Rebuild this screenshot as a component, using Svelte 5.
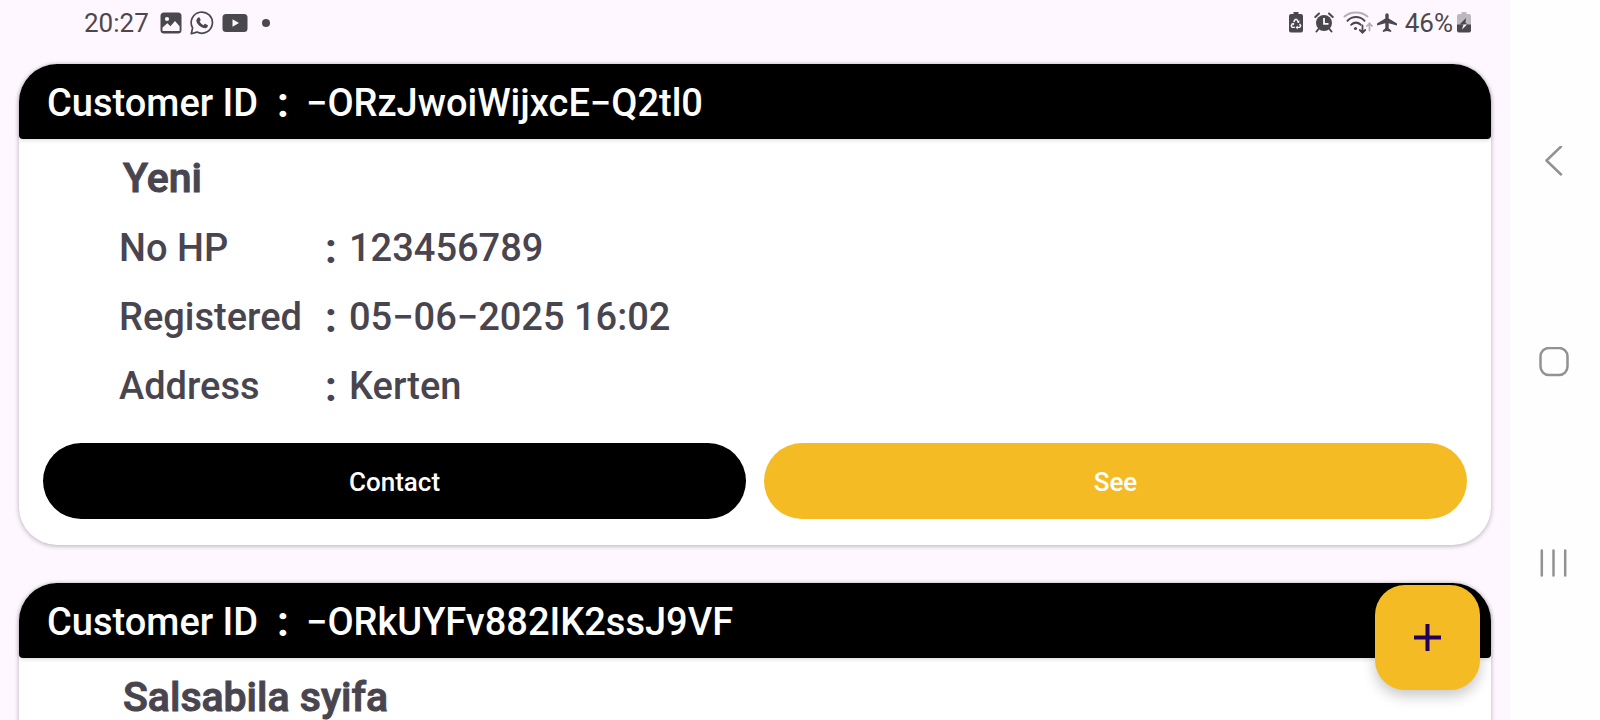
<script>
  const customers = [
    {
      id: '−ORzJwoiWijxcE−Q2tl0',
      name: 'Yeni',
      details: [
        ['No HP', '123456789'],
        ['Registered', '05−06−2025 16:02'],
        ['Address', 'Kerten']
      ]
    },
    { id: '−ORkUYFv882IK2ssJ9VF', name: 'Salsabila syifa', details: [] }
  ];
</script>

<div class="screen">
  <main class="content">
    <header class="status">
      <div class="group left">
        <span class="time">20:27</span>
        <svg width="22" height="22" viewBox="0 0 22 22" aria-hidden="true">
          <rect x=".5" y=".5" width="21" height="21" rx="3.500" fill="currentColor" />
          <circle cx="7" cy="7" r="2.100" fill="#fef7ff" />
          <path fill="#fef7ff" d="M2.500 15.500l4.800-4.200 3.200 3 4.500-5.300 4.600 5.200v4.800H2.500z" />
        </svg>
        <svg width="24" height="24" viewBox="0 0 24 24" aria-hidden="true">
          <path d="M1.300 22.700l1.300-5.800a10.600 10.600 0 1 1 4.400 4.200z" fill="none" stroke="currentColor" stroke-width="1.700" stroke-linejoin="round" />
          <path fill="currentColor" d="M8.300 6.500c.5-.4 1.100-.3 1.400.3l.9 2c.2.500-.1.900-.9 1.800.9 1.800 2.200 3 4 3.700.8-1.100 1.200-1.600 1.700-1.400l2.100 1c.5.300.5.600.3 1.300-.5 1.700-2.500 2.400-4.200 1.900-3.600-1.100-6.200-3.700-7.100-6.400-.5-1.600.5-3.200 1.800-4.200z" />
        </svg>
        <svg width="26" height="20" viewBox="0 0 26 20" aria-hidden="true">
          <rect x=".5" y="1" width="25" height="18" rx="3.500" fill="currentColor" />
          <path d="M10.500 6.300v7.400l6.500-3.700z" fill="#fef7ff" />
        </svg>
        <svg class="dot" width="8" height="8" viewBox="0 0 8 8" aria-hidden="true"><circle cx="4" cy="4" r="4" fill="currentColor" /></svg>
      </div>
      <div class="group right">
        <svg width="14" height="22" viewBox="0 0 14 22" aria-hidden="true">
          <path d="M4.500 0h5v2H12a2 2 0 0 1 2 2v14.500a2 2 0 0 1-2 2H2a2 2 0 0 1-2-2V4a2 2 0 0 1 2-2h2.500z" fill="currentColor" />
          <path d="M4.600 10l1.600-2.500h1.600L9.300 10M10.500 11.800l1.200 2-1 1.600H8M5.800 15.400H3.200l-1-1.600 1.200-2" fill="none" stroke="#fef7ff" stroke-width="1.400" />
          <path d="M10.600 8.300l-.5 3-2.400-1.200zM8.700 13.400v4l-2.100-2zM2.300 11.300l3-.4-.7 2.700z" fill="#fef7ff" />
        </svg>
        <svg class="alarm" width="20" height="22" viewBox="0 0 20 22" aria-hidden="true">
          <circle cx="10" cy="11" r="8" fill="currentColor" />
          <path d="M1.300 5l3.700-3.500M18.700 5L15 1.500M4.500 17l-2 2.500M15.500 17l2 2.500" stroke="currentColor" stroke-width="2" stroke-linecap="round" />
          <path d="M10 6v5.800h4.500" fill="none" stroke="#fef7ff" stroke-width="1.800" />
        </svg>
        <svg class="wifi" width="30" height="24" viewBox="0 0 30 24" fill="none" stroke-linecap="round" aria-hidden="true">
          <path d="M1.500 5.500c6-5.500 17-5.500 23 0" stroke="#b5b0b8" stroke-width="2" />
          <path d="M4.500 9.700c5-4.800 12-4.800 17 0" stroke="currentColor" stroke-width="2" />
          <path d="M8.200 13.800c3-2.700 6.600-2.700 9.600 0" stroke="currentColor" stroke-width="2" />
          <circle cx="12.500" cy="17.500" r="1.600" fill="currentColor" />
          <path d="M19.500 14.500v7M16.800 19l2.700 2.700 2.700-2.700" stroke="currentColor" stroke-width="1.800" />
          <path d="M26.500 19.500v-7M24 15l2.500-2.600 2.500 2.600" stroke="#b5b0b8" stroke-width="1.800" />
        </svg>
        <svg class="plane" width="20" height="20" viewBox="0 0 20 20" aria-hidden="true">
          <path d="M20 12.500v-2l-8.300-5V2a1.700 1.700 0 0 0-3.400 0v3.500L0 10.500v2l8.300-2.300v5L5.800 17.500V19l4.200-1 4.200 1v-1.500l-2.500-2.300v-5z" fill="currentColor" />
        </svg>
        <span class="percent">46%</span>
        <svg width="14" height="22" viewBox="0 0 14 22" aria-hidden="true">
          <path d="M4.500 0h5v2H12a2 2 0 0 1 2 2v9H0V4a2 2 0 0 1 2-2h2.500z" fill="#bdb8c0" />
          <path d="M0 12.500h14v6a2 2 0 0 1-2 2H2a2 2 0 0 1-2-2z" fill="currentColor" />
          <path d="M9 6l-6.500 6.500h9l-3-1.500z" fill="currentColor" />
          <path d="M6.500 12.500h3.500l-5 5z" fill="#fef7ff" />
        </svg>
      </div>
    </header>

    <div class="list">
      {#each customers as customer}
        <article class="card">
          <h2 class="card-header">
            <span class="title">Customer ID</span>
            <span class="colon">:</span>
            <span>{customer.id}</span>
          </h2>
          <h3 class="name">{customer.name}</h3>
          {#if customer.details.length}
            <dl class="details">
              {#each customer.details as [label, value]}
                <div class="row">
                  <dt>{label}</dt>
                  <dd><span class="colon">:</span>{value}</dd>
                </div>
              {/each}
            </dl>
            <div class="actions">
              <button class="contact" type="button">Contact</button>
              <button class="see" type="button">See</button>
            </div>
          {/if}
        </article>
      {/each}
    </div>

    <button class="fab" type="button" aria-label="Add customer">
      <svg width="27" height="27" viewBox="0 0 27 27" aria-hidden="true">
        <path d="M13.500 0v27M0 13.500h27" stroke="#21005d" stroke-width="4" />
      </svg>
    </button>
  </main>

  <nav class="system-nav">
    <button type="button" aria-label="Back">
      <svg width="30" height="30" viewBox="0 0 30 30"><path d="M22 .5L7.500 14.500 22 28.500" /></svg>
    </button>
    <button type="button" aria-label="Home">
      <svg width="30" height="30" viewBox="0 0 30 30"><rect x="1.500" y="1" width="27" height="27" rx="8.500" /></svg>
    </button>
    <button type="button" aria-label="Recents">
      <svg width="30" height="30" viewBox="0 0 30 30"><path d="M2.800 2.500v25M14.500 2.500v25M26.200 2.500v25" /></svg>
    </button>
  </nav>
</div>

<style>
  :global(body) {
    margin: 0;
  }

  .screen {
    display: flex;
    height: 100vh;
    overflow: hidden;
    background: #fef7ff;
    color: #49454f;
    font-family: Roboto, sans-serif;
    font-weight: 500;
  }

  .content {
    position: relative;
    display: flex;
    flex: 1;
    flex-direction: column;
    min-width: 0;
    overflow: hidden;
  }

  .status {
    display: flex;
    flex: none;
    justify-content: space-between;
    padding: 0 39px 18px 84px;
    color: #4b484d;
    font-size: 26px;
    font-weight: 450;
    line-height: 46px;
  }

  .group {
    display: flex;
    align-items: center;
  }

  .left {
    gap: 8px;
  }

  .time {
    margin-right: 3px;
  }

  .dot {
    margin-left: 6px;
  }

  .alarm {
    margin-left: 11px;
  }

  .wifi {
    margin-left: 9px;
  }

  .plane {
    margin: 0 8px 0 4px;
  }

  .percent {
    margin-right: 4px;
  }

  .list {
    display: flex;
    flex-direction: column;
    gap: 38px;
    padding: 0 19px;
  }

  .card {
    flex: none;
    box-sizing: border-box;
    min-height: 481px;
    padding-bottom: 26px;
    border-radius: 38px;
    background: #fff;
    box-shadow: 0 1px 5px rgb(0 0 0 / 30%);
  }

  .card-header {
    display: flex;
    margin: 0;
    padding: 3px 28px 0;
    border-radius: 38px 38px 4px 4px;
    background: #000;
    box-shadow: 0 1px 4px rgb(0 0 0 / 16%);
    color: #fff;
    font-size: 38px;
    font-weight: 500;
    line-height: 72px;
    white-space: nowrap;
  }

  .title {
    width: 230px;
  }

  .colon {
    width: 29px;
    font-size: 42px;
    font-weight: 700;
  }

  .name {
    margin: 0;
    padding: 4px 104px 0;
    font-size: 41px;
    font-weight: 500;
    line-height: 70px;
    -webkit-text-stroke: 1px currentColor;
  }

  .details {
    margin: 0;
    padding: 1px 100px 0;
    font-size: 38px;
    line-height: 69px;
  }

  .row {
    display: flex;
  }

  dt {
    width: 206px;
  }

  dd {
    display: flex;
    margin: 0;
  }

  dd .colon {
    width: 24px;
  }

  .actions {
    display: flex;
    gap: 18px;
    padding: 22px 24px 0;
  }

  button {
    border: 0;
    cursor: pointer;
    font-family: inherit;
  }

  .actions button {
    flex: 1;
    height: 76px;
    padding: 2px 0 0;
    border-radius: 38px;
    color: #fff;
    font-size: 26px;
    font-weight: 500;
  }

  .contact {
    background: #000;
  }

  .actions .see,
  .fab {
    background: #f4bb25;
  }

  .fab {
    position: absolute;
    right: 30px;
    bottom: 30px;
    display: grid;
    place-items: center;
    width: 105px;
    height: 105px;
    padding: 0;
    border-radius: 30px;
    box-shadow: 0 6px 14px rgb(0 0 0 / 22%);
  }

  .system-nav {
    display: flex;
    flex: none;
    flex-direction: column;
    justify-content: center;
    width: 90px;
    background: #fefefe;
  }

  .system-nav button {
    display: grid;
    place-items: center;
    height: 201px;
    padding: 4px 3px 0 0;
    background: none;
  }

  .system-nav svg {
    fill: none;
    stroke: #929292;
    stroke-width: 2.5;
    stroke-linecap: round;
    stroke-linejoin: round;
  }
</style>
